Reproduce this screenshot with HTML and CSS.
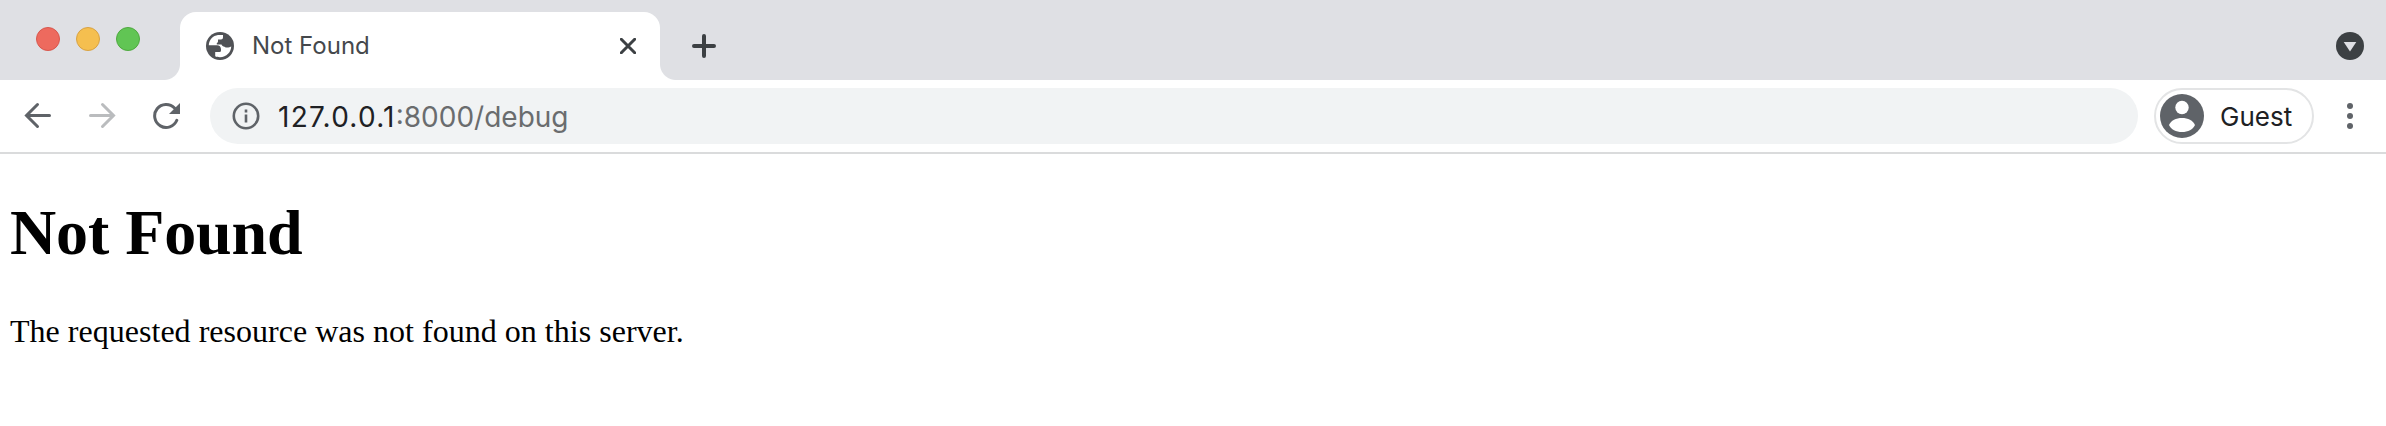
FILE: index.html
```html
<!DOCTYPE html>
<html lang="en">
<head>
<meta charset="utf-8">
<title>Not Found</title>
<link rel="stylesheet" href="styles.css">
</head>
<body>
<header class="tabstrip">
  <div class="lights"><span class="light red"></span><span class="light yellow"></span><span class="light green"></span></div>
  <div class="tab">
    <svg class="globe" viewBox="0 0 28 28" width="28" height="28"><circle cx="14" cy="14" r="14" fill="#505256"/><path fill="#fff" d="M2.800 13.200C3 8 7 3.600 12 3H17V5.500Q17 7.500 15 7.500H12V9.500Q12 10.500 10.800 11V12.600H15.500C16.200 14 17 14.700 18.500 14.700C20 16 23 16 25.200 14.200C25.400 19.800 20.500 25.200 14 25.200C12 25.200 10.500 24.900 9.200 24.300V20H13.500Q15 20 15 18.500V17.500C15 14.800 13.500 13.300 11 13.300Z"/></svg>
    <span class="tab-title">Not Found</span>
    <svg class="close" viewBox="0 0 16 16" width="16" height="16"><path d="M1.300 1.300L14.700 14.700M14.700 1.300L1.300 14.700"/></svg>
  </div>
  <svg class="plus" viewBox="0 0 24 24" width="24" height="24"><path d="M12 2V22M2 12H22"/></svg>
  <svg class="search" viewBox="0 0 28 28" width="28" height="28"><circle cx="14" cy="14" r="14" fill="#3c4043"/><path d="M7.700 10H20.300L14 19.500Z" fill="#dfe0e4"/></svg>
</header>
<nav class="toolbar">
  <svg class="icon back" viewBox="0 0 28 28" width="28" height="28"><path d="M25.500 13.500H3M13.500 2.500L2.500 13.500L13.500 24.500"/></svg>
  <svg class="icon forward" viewBox="0 0 28 28" width="28" height="28"><path d="M2.500 13.500H25M14.500 2.500L25.500 13.500L14.500 24.500"/></svg>
  <svg class="icon reload" viewBox="0 0 28 28" width="28" height="28"><path d="M24.800 18.300A11.500 11.500 0 1 1 22.500 6"/><path class="tip" d="M28 1V12H17Z"/></svg>
  <div class="address">
    <svg class="info" viewBox="0 0 28 28" width="28" height="28"><circle cx="14" cy="14" r="12.200"/><path d="M14 12.500V20.500M14 7.500V10.500"/></svg>
    <span class="url"><span class="host">127.0.0.1</span>:8000/debug</span>
  </div>
  <div class="profile">
    <svg viewBox="0 0 44 44" width="44" height="44"><circle cx="22" cy="22" r="22" fill="#5f6368"/><circle cx="22" cy="13.500" r="6.700" fill="#fff"/><path fill="#fff" d="M9 31C11 26.500 16 24 22 24S33 26.500 35 31C33 35.500 28 38 22 38S11 35.500 9 31Z"/></svg>
    <span class="guest">Guest</span>
  </div>
  <svg class="menu" viewBox="0 0 6 26" width="6" height="26"><circle cx="3" cy="3" r="3"/><circle cx="3" cy="13" r="3"/><circle cx="3" cy="23" r="3"/></svg>
</nav>
<main class="page">
  <h1>Not Found</h1>
  <p>The requested resource was not found on this server.</p>
</main>
</body>
</html>
```
FILE: styles.css
```css
* { box-sizing: border-box; }
body { margin: 0; width: 2386px; height: 426px; overflow: hidden; background: #fff; font-family: Inter, sans-serif; }
svg { display: block; flex: none; }
.tabstrip { height: 80px; background: #dfe0e4; display: flex; align-items: flex-start; }
.lights { display: flex; gap: 16px; padding: 27px 0 0 36px; width: 180px; }
.light { width: 24px; height: 24px; border-radius: 50%; border: 1px solid; }
.red { background: #ed6a5e; border-color: #d8574d; }
.yellow { background: #f5bf4f; border-color: #d8a243; }
.green { background: #61c554; border-color: #4fa93f; }
.tab { position: relative; width: 480px; height: 68px; margin-top: 12px; padding: 0 24px 0 26px; display: flex; align-items: flex-start; background: #fff; border-radius: 16px 16px 0 0; }
.tab::before, .tab::after { content: ""; position: absolute; bottom: 0; width: 16px; height: 16px; }
.tab::before { left: -16px; background: radial-gradient(circle at 0 0, transparent 15.5px, #fff 16.5px); }
.tab::after { right: -16px; background: radial-gradient(circle at 100% 0, transparent 15.5px, #fff 16.5px); }
.globe { margin-top: 20px; }
.tab-title { margin: 19px 0 0 18px; font-size: 24px; line-height: 30px; color: #45484c; white-space: nowrap; }
.close { margin: 26px 0 0 auto; }
.close path { fill: none; stroke: #3c4043; stroke-width: 3; stroke-linecap: round; }
.plus { margin: 34px 0 0 32px; }
.plus path { fill: none; stroke: #3c4043; stroke-width: 4; stroke-linecap: round; }
.search { margin: 32px 22px 0 auto; }
.toolbar { height: 74px; border-bottom: 2px solid #dadbdc; display: flex; align-items: flex-start; padding: 8px 33px 0 24px; }
.icon { margin-top: 14px; fill: none; stroke: #5f6368; stroke-width: 3; stroke-linecap: round; }
.forward { margin-left: 36px; stroke: #babcbe; }
.reload { margin-left: 36px; }
.tip { fill: #5f6368; stroke: none; }
.address { margin-left: 30px; width: 1928px; height: 56px; border-radius: 28px; background: #f1f3f4; display: flex; align-items: center; padding-left: 22px; }
.info { fill: none; stroke: #5f6368; stroke-width: 2.6; }
.url { margin: 1px 0 0 18px; font-size: 28px; color: #6a6c6e; white-space: nowrap; }
.host { color: #202124; letter-spacing: 1.25px; }
.profile { margin-left: 16px; width: 160px; height: 56px; border: 2px solid #e3e4e5; border-radius: 28px; display: flex; align-items: center; padding-left: 4px; }
.guest { margin: 1px 0 0 16px; font-size: 26px; color: #202124; }
.menu { margin: 15px 0 0 auto; fill: #5f6368; }
.page { padding: 42px 10px 0; font-family: "Liberation Serif", serif; color: #000; }
.page h1 { margin: 0; font-size: 64px; line-height: 74px; letter-spacing: -0.1px; }
.page p { margin: 43px 0 0; font-size: 32px; line-height: 36px; letter-spacing: 0.02px; }
```
